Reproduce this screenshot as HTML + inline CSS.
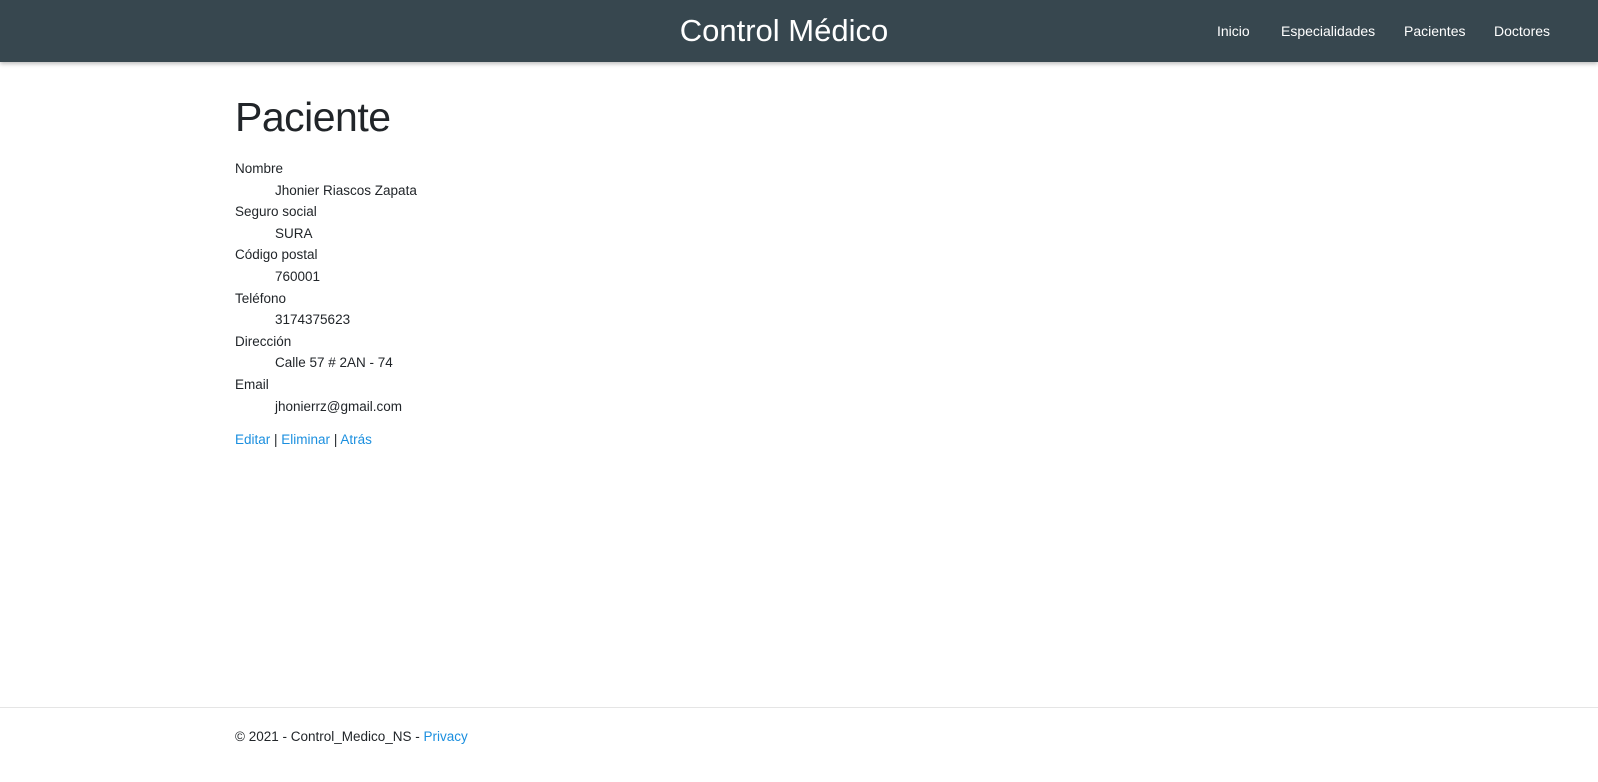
<!DOCTYPE html>
<html><head><meta charset="utf-8"><style>
body{margin:0;font-family:"Liberation Sans",sans-serif;color:#212529;background:#fff;width:1598px;height:782px;position:relative;overflow:hidden;font-size:13.5px}
.nav{position:absolute;left:0;top:0;width:1598px;height:62px;background:#37474f;box-shadow:0 2px 4px rgba(0,0,0,.25)}
.brand{position:absolute;left:0;width:1568px;text-align:center;top:13px;font-size:31px;color:#fff}
.links{position:absolute;top:23px;font-size:14px;color:#fff}
.links span{position:absolute;white-space:nowrap}
h1{position:absolute;left:235px;top:94px;margin:0;font-weight:400;font-size:41px;letter-spacing:-0.5px}
.dl{position:absolute;left:235px;top:158px;line-height:21.6px}
.dd{padding-left:40px}
a{color:#1b8fdf;text-decoration:none}
.act{position:absolute;left:235px;top:432px}
.foot{position:absolute;left:0;top:707px;width:1598px;border-top:1px solid #e5e5e5}
.ft{position:absolute;left:235px;top:729px}
</style></head><body>
<div class="nav"><div class="brand">Control Médico</div>
<div class="links"><span style="left:1217px">Inicio</span><span style="left:1281px">Especialidades</span><span style="left:1404px">Pacientes</span><span style="left:1494px">Doctores</span></div></div>
<h1>Paciente</h1>
<div class="dl">
<div>Nombre</div><div class="dd">Jhonier Riascos Zapata</div>
<div>Seguro social</div><div class="dd">SURA</div>
<div>Código postal</div><div class="dd">760001</div>
<div>Teléfono</div><div class="dd">3174375623</div>
<div>Dirección</div><div class="dd">Calle 57 # 2AN - 74</div>
<div>Email</div><div class="dd">jhonierrz@gmail.com</div>
</div>
<div class="act"><a>Editar</a> | <a>Eliminar</a> | <a>Atrás</a></div>
<div class="foot"></div>
<div class="ft">© 2021 - Control_Medico_NS - <a>Privacy</a></div>
</body></html>
